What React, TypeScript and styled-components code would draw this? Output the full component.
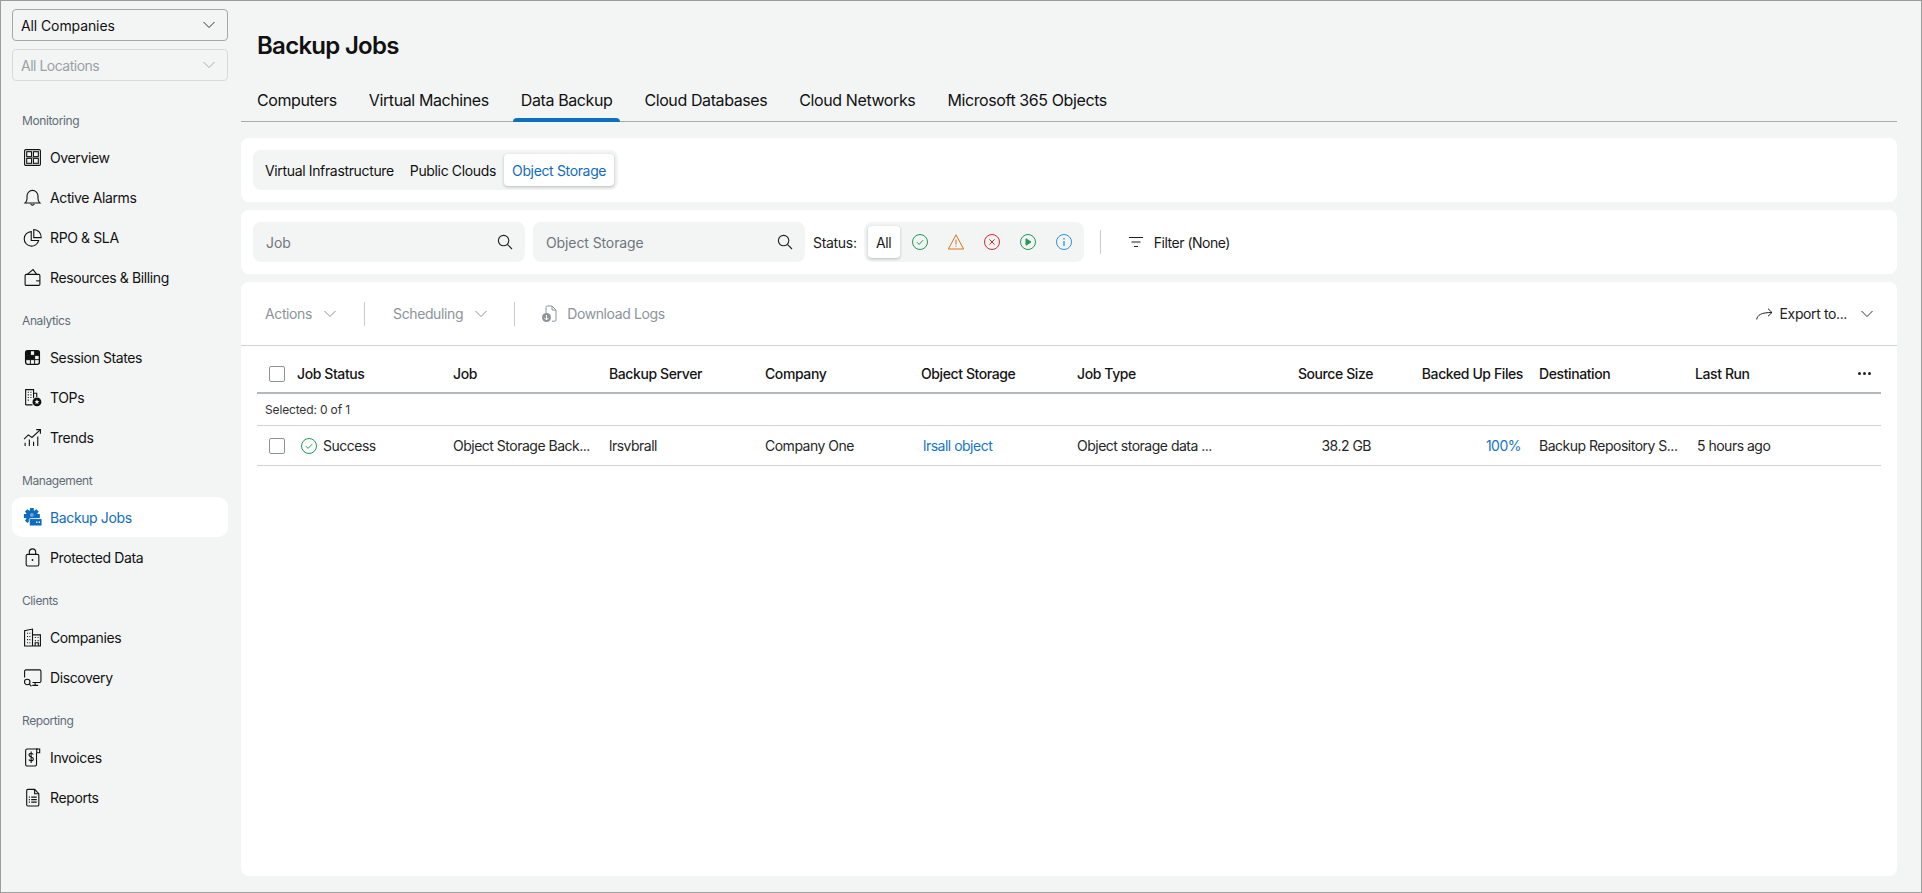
import React from "react";
import styled, { createGlobalStyle } from "styled-components";

const Global = createGlobalStyle`
  html, body { margin: 0; padding: 0; background: #f3f5f5; }
  body { font-family: Inter, "Noto Sans", sans-serif; font-size: 14px; color: #1a1a1a; }
  * { box-sizing: border-box; }
`;

const Frame = styled.div`
  width: 1922px; height: 893px; border: 1px solid #9c9c9c; display: flex; background: #f3f5f5; overflow: hidden;
`;
const Sidebar = styled.aside`
  width: 240px; flex: none; padding: 8px 13px 0 11px; display: flex; flex-direction: column;
`;
const Select = styled.div<{ $disabled?: boolean }>`
  height: 32px; border-radius: 4px; display: flex; align-items: center; justify-content: space-between;
  padding: 0 11px 0 8px; margin-bottom: 8px; font-size: 14px;
  letter-spacing: ${p => (p.$disabled ? "-0.5px" : "-0.1px")};
  border: 1px solid ${p => (p.$disabled ? "#d6dadb" : "#a3a7a9")};
  color: ${p => (p.$disabled ? "#9aa1a6" : "#111")};
`;
const NavGroup = styled.div<{ $first?: boolean }>`
  margin-top: ${p => (p.$first ? "20px" : "12px")};
  display: flex; flex-direction: column;
`;
const NavLabel = styled.div`
  height: 24px; line-height: 24px; margin-bottom: 4px; padding-left: 10px; font-size: 12px; letter-spacing: -0.4px; color: #5f6b76;
`;
const NavItem = styled.div<{ $active?: boolean }>`
  height: 40px; display: flex; align-items: center; gap: 9px; padding-left: 12px; border-radius: 10px; font-size: 14px; letter-spacing: -0.38px;
  background: ${p => (p.$active ? "#fff" : "transparent")};
  color: ${p => (p.$active ? "#0f6cbd" : "#111")};
`;
const Glyph = styled.svg`
  width: 19px; height: 19px; flex: none; margin-left: -1.5px; margin-right: -0.5px;
`;

const Main = styled.main`
  flex: 1; min-width: 0; padding: 29px 24px 16px 0; display: flex; flex-direction: column;
`;
const Title = styled.h1`
  margin: 0 0 22px 16px; font-size: 24px; line-height: 32px; font-weight: 600; color: #111; letter-spacing: -0.72px;
`;
const Tabs = styled.nav`
  display: flex; gap: 16px; height: 38px; border-bottom: 1px solid #a9adaf; padding-left: 8px; margin-bottom: 16px;
`;
const Tab = styled.div<{ $active?: boolean }>`
  position: relative; height: 38px; padding: 0 8px 6px; display: flex; align-items: center; font-size: 16px; color: #111; letter-spacing: -0.4px;
  &::after {
    content: ""; position: absolute; left: 0; right: 0; bottom: 0; height: 4px; border-radius: 4px 4px 0 0;
    background: ${p => (p.$active ? "#0f6fbf" : "transparent")};
  }
`;
const Card = styled.section`
  background: #fff; border-radius: 8px; height: 64px; flex: none; margin-bottom: 8px; padding: 12px; display: flex; align-items: center;
`;
const TableCard = styled.section`
  background: #fff; border-radius: 8px; flex: 1; display: flex; flex-direction: column;
`;
const Segments = styled.div`
  height: 40px; background: #f3f5f5; border-radius: 8px; display: flex; align-items: center; padding: 0 4px;
`;
const Segment = styled.div<{ $active?: boolean }>`
  height: 32px; display: flex; align-items: center; padding: 0 8px; border-radius: 4px; font-size: 14px; letter-spacing: -0.35px;
  color: ${p => (p.$active ? "#0f6cbd" : "#111")};
  background: ${p => (p.$active ? "#fff" : "transparent")};
  box-shadow: ${p => (p.$active ? "0 1px 3px rgba(0,0,0,.25)" : "none")};
`;
const Search = styled.div`
  width: 272px; height: 40px; background: #f3f5f5; border-radius: 8px; margin-right: 8px; display: flex; align-items: center; justify-content: space-between;
  padding: 0 12px 0 13px; color: #6f767c; font-size: 14px; letter-spacing: -0.1px;
`;
const SearchIcon = styled.svg`
  width: 16px; height: 16px; flex: none;
`;
const StatusLabel = styled.span`
  font-size: 14px; color: #222; margin-right: 7px; letter-spacing: -0.3px;
`;
const StatusGroup = styled.div`
  height: 40px; width: 220px; background: #f3f5f5; border-radius: 8px; display: flex; align-items: center; padding-left: 4px;
`;
const StatusAll = styled.div`
  width: 32px; height: 32px; background: #fff; border-radius: 4px; box-shadow: 0 1px 3px rgba(0,0,0,.25); display: flex; align-items: center; justify-content: center;
  font-size: 14px; margin-right: 2px; letter-spacing: -0.3px;
`;
const StatusBtn = styled.div`
  width: 36px; height: 32px; display: flex; align-items: center; justify-content: center;
`;
const Divider = styled.div<{ $left: number; $right: number }>`
  width: 1px; height: 24px; background: #c9cdcf; margin: 0 ${p => p.$right}px 0 ${p => p.$left}px; flex: none;
`;
const FilterBtn = styled.div`
  display: flex; align-items: center; gap: 10px; margin-left: 11px; font-size: 14px; color: #1a1a1a; letter-spacing: -0.48px;
`;
const Toolbar = styled.div`
  height: 64px; flex: none; border-bottom: 1px solid #d0d3d5; padding: 0 23px 0 24px; display: flex; align-items: center;
`;
const ToolBtn = styled.div<{ $muted?: boolean; $gap?: number }>`
  display: flex; align-items: center; gap: ${p => p.$gap ?? 11}px; font-size: 14px; letter-spacing: -0.38px;
  color: ${p => (p.$muted ? "#8d9499" : "#222")};
`;
const ExportLabel = styled.span`
  margin-right: 6px;
`;
const Spacer = styled.div`
  flex: 1;
`;
const TableWrap = styled.div`
  margin: 0 16px; display: flex; flex-direction: column;
`;
const Row = styled.div<{ $header?: boolean }>`
  display: grid; grid-template-columns: 40px repeat(6, 156px) 156px 150px 156px 156px 30px; align-items: center;
  height: ${p => (p.$header ? 48 : 40)}px;
  padding-top: ${p => (p.$header ? 9 : 0)}px;
  border-bottom: ${p => (p.$header ? "2px solid #b4b8ba" : "1px solid #d0d3d5")};
`;
const HCell = styled.div<{ $right?: boolean }>`
  font-size: 14px; font-weight: 500; letter-spacing: -0.4px; color: #151515; white-space: nowrap;
  ${p => p.$right && "text-align: right; padding-right: 16px;"}
`;
const Cell = styled.div<{ $right?: boolean; $link?: boolean; $indent?: number }>`
  font-size: 14px; letter-spacing: -0.5px; white-space: nowrap; color: ${p => (p.$link ? "#1476c6" : "#262626")};
  padding-left: ${p => p.$indent ?? 0}px;
  ${p => p.$right && "text-align: right; padding-right: 18px;"}
`;
const StatusCell = styled(Cell)`
  display: flex; align-items: center; gap: 6px; padding-left: 4px;
`;
const Checkbox = styled.div`
  width: 16px; height: 16px; margin-left: 12px; border: 1px solid #8e9396; border-radius: 2px; background: #fff;
`;
const SelectedRow = styled.div`
  height: 32px; display: flex; align-items: center; padding-left: 8px; font-size: 12px; letter-spacing: -0.15px; color: #333; border-bottom: 1px solid #d0d3d5;
`;
const Dots = styled.div`
  display: flex; gap: 2px; margin-left: 7px;
`;
const Dot = styled.span`
  width: 3px; height: 3px; border-radius: 50%; background: #222;
`;

const Chevron = ({ color = "#333" }: { color?: string }) => (
  <svg width="14" height="8" viewBox="0 0 14 8" fill="none" stroke={color} strokeWidth="1">
    <path d="M1.5 1l5.5 5.5L12.5 1" />
  </svg>
);
const SearchGlyph = () => (
  <SearchIcon viewBox="0 0 16 16" fill="none" stroke="#222" strokeWidth="1.1">
    <circle cx="6.6" cy="6.6" r="5.2" />
    <path d="M10.4 10.4L15 15" />
  </SearchIcon>
);

const sp = { fill: "none", stroke: "#111", strokeWidth: 1.05 };
const teeth = [0, 45, 90, 135];
const Icons: Record<string, React.ReactNode> = {
  overview: (
    <g {...sp}>
      <rect x="1.5" y="1.5" width="15" height="15" rx="1.2" />
      <rect x="3.5" y="3.5" width="4.6" height="4.6" />
      <rect x="9.9" y="3.5" width="4.6" height="4.6" />
      <rect x="3.5" y="9.9" width="4.6" height="4.6" />
      <rect x="9.9" y="9.9" width="4.6" height="4.6" />
      <path d="M3.5 9h11" stroke="#777" strokeWidth="1.4" />
    </g>
  ),
  bell: (
    <g {...sp}>
      <path d="M2 14.2c1.2-1 1.8-2 1.8-4V7.5a5.2 5.2 0 0 1 10.4 0v2.7c0 2 .6 3 1.8 4z" />
      <path d="M7.3 15a1.8 1.8 0 0 0 3.4 0" />
    </g>
  ),
  pie: (
    <g {...sp}>
      <path d="M7.8 3.4a6.9 6.9 0 1 0 7 8.5H7.8z" />
      <path d="M10.2 1.4v7.7h7a7.3 7.3 0 0 0-7-7.7z" />
    </g>
  ),
  wallet: (
    <g {...sp}>
      <rect x="2" y="6" width="14" height="10.5" rx="1.2" />
      <path d="M4 6l5.5-4.5L13 6" />
      <path d="M12.5 12.2h3.5" />
    </g>
  ),
  session: (
    <g>
      <rect x="2.5" y="2.5" width="13" height="13" rx="2" fill="#f3f5f5" stroke="#111" strokeWidth="1.3" />
      <path d="M7 2.5v13M11 2.5v13M2.5 7h13M2.5 11h13" stroke="#111" strokeWidth=".9" />
      <rect x="2.5" y="2.5" width="4.5" height="4.5" fill="#111" />
      <rect x="11" y="2.5" width="4.5" height="4.5" fill="#111" />
      <rect x="7" y="7" width="4" height="4" fill="#111" />
      <rect x="2.5" y="7" width="4.5" height="4" fill="#111" />
    </g>
  ),
  tops: (
    <g>
      <g {...sp}>
        <path d="M2.5 16V1.5h7.5v8M2.5 16h6.5" />
        <path d="M10 5h3v3.5" />
      </g>
      <path d="M4.5 4h1M7 4h1M4.5 6.5h1M7 6.5h1M4.5 9h1M7 9h1M4.5 11.5h1" stroke="#111" strokeWidth="1.1" />
      <circle cx="13.2" cy="13.2" r="4.2" fill="#111" />
      <path d="M13.2 10.8l.7 1.5 1.6.2-1.2 1.1.3 1.6-1.4-.8-1.4.8.3-1.6-1.2-1.1 1.6-.2z" fill="#f3f5f5" />
    </g>
  ),
  trends: (
    <g {...sp}>
      <path d="M1 10.5l4-4 3.5 2.5L16 2" />
      <path d="M12.5 1.5H16.5V5.5" />
      <path d="M2 17v-3M6 17v-6M10 17v-4M14 17V8" />
    </g>
  ),
  jobs: (
    <g>
      <g fill="#0f6cbd">
        <circle cx="8.4" cy="7.6" r="5.8" />
        {teeth.map(a => (
          <rect key={a} x="6.6" y="0" width="3.6" height="15.2" rx=".5" transform={`rotate(${a} 8.4 7.6)`} />
        ))}
      </g>
      <circle cx="8.4" cy="6.6" r="1.8" fill="#6ea8dc" />
      <rect x="6" y="10" width="12" height="7" rx="1" fill="#0f6cbd" stroke="#fff" strokeWidth=".8" />
      <path d="M12.5 13.5h1.2M14.9 13.5h1.2" stroke="#fff" strokeWidth="1.2" />
    </g>
  ),
  lock: (
    <g {...sp}>
      <rect x="3" y="6" width="12" height="11" rx="1.4" />
      <path d="M6 6V3.8a3 3 0 0 1 6 0V6" />
      <circle cx="9" cy="11.3" r=".9" fill="#111" stroke="none" />
    </g>
  ),
  companies: (
    <g {...sp}>
      <path d="M1.5 17V2.5L9 1v16M9 6.5h7.5V17M1 17h16" />
      <path d="M3.8 5h1M6 5h1M3.8 8h1M6 8h1M3.8 11h1M6 11h1M3.8 14h1M6 14h1M11.2 9h1M13.8 9h1M11.2 12h1M13.8 12h1M11.5 17v-3h3v3" />
    </g>
  ),
  discovery: (
    <g {...sp}>
      <path d="M1.5 9V3a1.2 1.2 0 0 1 1.2-1.2h13.1A1.2 1.2 0 0 1 17 3v9.5a1.2 1.2 0 0 1-1.2 1.2H9" />
      <path d="M11.5 13.7v2.8M8.8 16.5h5.5" />
      <circle cx="4" cy="13.3" r="2.6" />
      <path d="M6 15.3l2 2" />
    </g>
  ),
  invoices: (
    <g {...sp}>
      <path d="M12.8 4.5v11.2a1.3 1.3 0 0 1-1.3 1.3H3.8a1.3 1.3 0 0 1-1.3-1.3V2.3A1.3 1.3 0 0 1 3.8 1h10.2" />
      <path d="M13 1h2.8v3.5H13z" />
      <path d="M9.7 6.2C9.3 5.4 8.6 5 7.7 5 6.5 5 5.7 5.7 5.7 6.7c0 2.4 4.1 1.3 4.1 3.8 0 1-.9 1.7-2.1 1.7-1 0-1.7-.5-2.1-1.3M7.7 3.3v11" />
    </g>
  ),
  reports: (
    <g {...sp}>
      <path d="M3.5 2.5A1.2 1.2 0 0 1 4.7 1.3h6.3L15 5.4v10.4a1.2 1.2 0 0 1-1.2 1.2H4.7a1.2 1.2 0 0 1-1.2-1.2z" />
      <path d="M11 1.3v4.2h4" />
      <path d="M5.5 8.6h1M7.8 8.6h5.2M5.5 11h1M7.8 11h5.2M5.5 13.4h1M7.8 13.4h5.2" />
    </g>
  ),
};

const NavIcon = ({ name }: { name: string }) => <Glyph viewBox="0 0 18 18">{Icons[name]}</Glyph>;

const nav = [
  { label: "Monitoring", items: [["overview", "Overview"], ["bell", "Active Alarms"], ["pie", "RPO & SLA"], ["wallet", "Resources & Billing"]] },
  { label: "Analytics", items: [["session", "Session States"], ["tops", "TOPs"], ["trends", "Trends"]] },
  { label: "Management", items: [["jobs", "Backup Jobs"], ["lock", "Protected Data"]] },
  { label: "Clients", items: [["companies", "Companies"], ["discovery", "Discovery"]] },
  { label: "Reporting", items: [["invoices", "Invoices"], ["reports", "Reports"]] },
];

const CheckCircle = () => (
  <svg width="16" height="16" viewBox="0 0 16 16" fill="none" stroke="#1f9a54" strokeWidth="1">
    <circle cx="8" cy="8" r="7.5" />
    <path d="M4.9 8.2l2.2 2.2 4-4.2" />
  </svg>
);

const statusIcons = [
  <CheckCircle key="ok" />,
  <svg key="warn" width="16" height="16" viewBox="0 0 16 16" fill="none" stroke="#d4761a" strokeWidth="1">
    <path d="M8 .8L15.6 15H.4z" />
    <path d="M8 5.5v5M8 11.6v1.2" />
  </svg>,
  <svg key="err" width="16" height="16" viewBox="0 0 16 16" fill="none" stroke="#e0242c" strokeWidth="1">
    <circle cx="8" cy="8" r="7.5" />
    <path d="M5.4 5.4l5.2 5.2M10.6 5.4l-5.2 5.2" />
  </svg>,
  <svg key="run" width="16" height="16" viewBox="0 0 16 16" fill="none" stroke="#1f9a54" strokeWidth="1">
    <circle cx="8" cy="8" r="7.5" />
    <path d="M6 4.8l5 3.2-5 3.2z" fill="#1f9a54" />
  </svg>,
  <svg key="info" width="16" height="16" viewBox="0 0 16 16" fill="none" stroke="#2c93e0" strokeWidth="1">
    <circle cx="8" cy="8" r="7.5" />
    <path d="M8 7v5M8 4v1.4" strokeWidth="1.3" />
  </svg>,
];

const headers = ["Job Status", "Job", "Backup Server", "Company", "Object Storage", "Job Type"];

export default function App() {
  return (
    <>
      <Global />
      <Frame>
        <Sidebar>
          <Select>
            All Companies
            <Chevron color="#333" />
          </Select>
          <Select $disabled>
            All Locations
            <Chevron color="#a5abaf" />
          </Select>
          {nav.map((g, i) => (
            <NavGroup key={g.label} $first={i === 0}>
              <NavLabel>{g.label}</NavLabel>
              {g.items.map(([ic, t]) => (
                <NavItem key={t} $active={t === "Backup Jobs"}>
                  <NavIcon name={ic} />
                  {t}
                </NavItem>
              ))}
            </NavGroup>
          ))}
        </Sidebar>
        <Main>
          <Title>Backup Jobs</Title>
          <Tabs>
            {["Computers", "Virtual Machines", "Data Backup", "Cloud Databases", "Cloud Networks", "Microsoft 365 Objects"].map(t => (
              <Tab key={t} $active={t === "Data Backup"}>{t}</Tab>
            ))}
          </Tabs>
          <Card>
            <Segments>
              <Segment>Virtual Infrastructure</Segment>
              <Segment>Public Clouds</Segment>
              <Segment $active>Object Storage</Segment>
            </Segments>
          </Card>
          <Card>
            <Search>Job<SearchGlyph /></Search>
            <Search>Object Storage<SearchGlyph /></Search>
            <StatusLabel>Status:</StatusLabel>
            <StatusGroup>
              <StatusAll>All</StatusAll>
              {statusIcons.map((ic, i) => <StatusBtn key={i}>{ic}</StatusBtn>)}
            </StatusGroup>
            <Divider $left={16} $right={16} />
            <FilterBtn>
              <svg width="16" height="12" viewBox="0 0 16 12" fill="none" stroke="#222" strokeWidth="1">
                <path d="M1 1.5h14M3.5 6h9M6 10.5h4" />
              </svg>
              Filter (None)
            </FilterBtn>
          </Card>
          <TableCard>
            <Toolbar>
              <ToolBtn $muted>Actions <Chevron color="#8d9499" /></ToolBtn>
              <Divider $left={27} $right={28} />
              <ToolBtn $muted>Scheduling <Chevron color="#8d9499" /></ToolBtn>
              <Divider $left={26} $right={26} />
              <ToolBtn $muted $gap={8}>
                <svg width="18" height="18" viewBox="0 0 18 18" fill="none" stroke="#8d9499" strokeWidth="1">
                  <path d="M5 8V2.2A1.2 1.2 0 0 1 6.2 1H11l4 4v10a1.2 1.2 0 0 1-1.2 1.2H11" />
                  <path d="M11 1v4h4" />
                  <circle cx="5.5" cy="12.5" r="4.5" fill="#8d9499" stroke="none" />
                  <path d="M5.5 10v5M3.3 12.8l2.2 2.2 2.2-2.2" stroke="#fff" />
                </svg>
                Download Logs
              </ToolBtn>
              <Spacer />
              <ToolBtn $gap={7}>
                <svg width="17" height="12" viewBox="0 0 17 12" fill="none" stroke="#222" strokeWidth="1">
                  <path d="M.7 11.5C1.5 7 5 4.5 16 4.5M12 .7l4 3.8-4 3.8" />
                </svg>
                <ExportLabel>Export to...</ExportLabel>
                <Chevron color="#333" />
              </ToolBtn>
            </Toolbar>
            <TableWrap>
              <Row $header>
                <Checkbox />
                {headers.map(h => <HCell key={h}>{h}</HCell>)}
                <HCell $right>Source Size</HCell>
                <HCell $right>Backed Up Files</HCell>
                <HCell>Destination</HCell>
                <HCell>Last Run</HCell>
                <Dots><Dot /><Dot /><Dot /></Dots>
              </Row>
              <SelectedRow>Selected: 0 of 1</SelectedRow>
              <Row>
                <Checkbox />
                <StatusCell><CheckCircle />Success</StatusCell>
                <Cell>Object Storage Back...</Cell>
                <Cell>lrsvbrall</Cell>
                <Cell>Company One</Cell>
                <Cell $link $indent={2}>lrsall object</Cell>
                <Cell>Object storage data ...</Cell>
                <Cell $right>38.2 GB</Cell>
                <Cell $right $link>100%</Cell>
                <Cell>Backup Repository S...</Cell>
                <Cell $indent={2}>5 hours ago</Cell>
                <div />
              </Row>
            </TableWrap>
          </TableCard>
        </Main>
      </Frame>
    </>
  );
}
